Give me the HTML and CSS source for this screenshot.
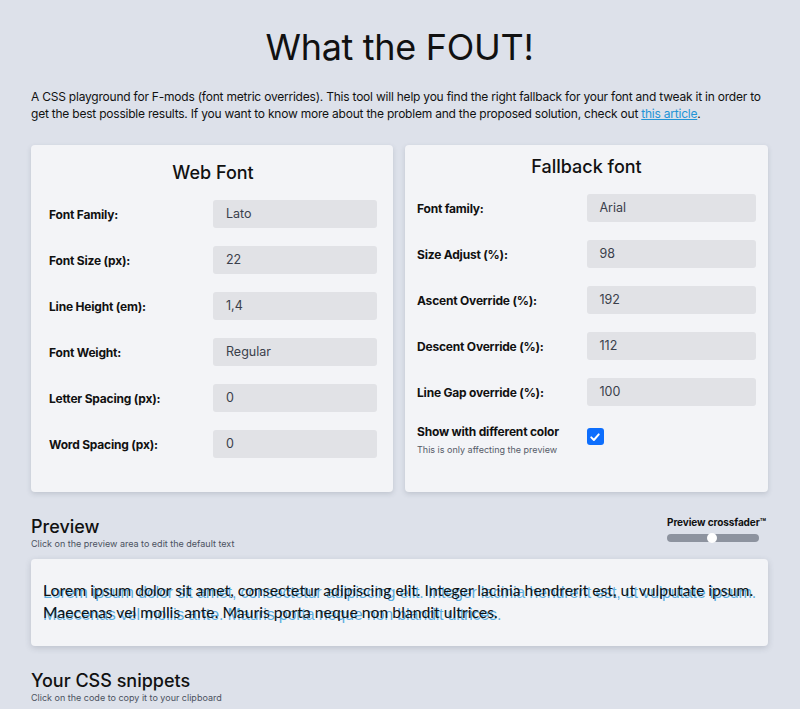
FILE: index.html
```html
<!DOCTYPE html>
<html lang="en">
<head>
<meta charset="utf-8">
<title>What the FOUT!</title>
<link rel="stylesheet" href="styles.css">
</head>
<body>
<main class="page">
  <h1 class="title">What the FOUT!</h1>
  <p class="intro">A CSS playground for F-mods (font metric overrides). This tool will help you find the right fallback for your font and tweak it in order to get the best possible results. If you want to know more about the problem and the proposed solution, check out <a href="#">this article</a>.</p>

  <section class="panels">
    <div class="card card-web">
      <h2 class="card-title">Web Font</h2>
      <div class="form">
        <label class="label">Font Family:</label><div class="input">Lato</div>
        <label class="label">Font Size (px):</label><div class="input">22</div>
        <label class="label">Line Height (em):</label><div class="input">1,4</div>
        <label class="label">Font Weight:</label><div class="input">Regular</div>
        <label class="label">Letter Spacing (px):</label><div class="input">0</div>
        <label class="label">Word Spacing (px):</label><div class="input">0</div>
      </div>
    </div>
    <div class="card card-fallback">
      <h2 class="card-title">Fallback font</h2>
      <div class="form">
        <label class="label">Font family:</label><div class="input">Arial</div>
        <label class="label">Size Adjust (%):</label><div class="input">98</div>
        <label class="label">Ascent Override (%):</label><div class="input">192</div>
        <label class="label">Descent Override (%):</label><div class="input">112</div>
        <label class="label">Line Gap override (%):</label><div class="input">100</div>
        <div class="label-block">
          <div class="label">Show with different color</div>
          <div class="hint">This is only affecting the preview</div>
        </div>
        <div class="check-cell">
          <span class="checkbox"><svg viewBox="0 0 16 16" width="12" height="12"><path d="M3 8.5 L6.5 12 L13 4.5" fill="none" stroke="#fff" stroke-width="2.6" stroke-linecap="round" stroke-linejoin="round"/></svg></span>
        </div>
      </div>
    </div>
  </section>

  <section class="section-head">
    <div>
      <h2 class="section-title">Preview</h2>
      <p class="section-sub">Click on the preview area to edit the default text</p>
    </div>
    <div class="fader">
      <div class="fader-label">Preview crossfader™</div>
      <div class="fader-track"><span class="fader-thumb"></span></div>
    </div>
  </section>

  <div class="preview">
    <p class="preview-fallback" aria-hidden="true">Lorem ipsum dolor sit amet, consectetur adipiscing elit. Integer lacinia hendrerit est, ut vulputate ipsum.<br>Maecenas vel mollis ante. Mauris porta neque non blandit ultrices.</p>
    <p class="preview-web">Lorem ipsum dolor sit amet, consectetur adipiscing elit. Integer lacinia hendrerit est, ut vulputate ipsum. Maecenas vel mollis ante. Mauris porta neque non blandit ultrices.</p>
  </div>

  <section class="section-head">
    <div>
      <h2 class="section-title">Your CSS snippets</h2>
      <p class="section-sub">Click on the code to copy it to your clipboard</p>
    </div>
  </section>

  <div class="snippets">
    <pre class="snippet">@font-face {
  font-family: "Lato-fallback";
  size-adjust: 98%;
  ascent-override: 192%;
}</pre>
    <pre class="snippet">font-family: "Lato", "Lato-fallback";</pre>
  </div>
</main>
</body>
</html>
```

FILE: styles.css
```css
* { box-sizing: border-box; }
html, body { margin: 0; padding: 0; }
body {
  background: #dde1ea;
  font-family: Inter, "Noto Sans", sans-serif;
  color: #111;
}
.page {
  padding: 0 32px 0 31px;
}
.title {
  margin: 0;
  padding-top: 24px;
  font-size: 36px;
  line-height: 46px;
  font-weight: 400;
  text-align: center;
  letter-spacing: -0.3px;
}
.intro {
  margin: 18px 0 0;
  font-size: 12px;
  line-height: 17px;
  letter-spacing: -0.22px;
}
.intro a { color: #2394d6; }

.panels {
  margin-top: 23px;
  display: grid;
  grid-template-columns: 362px 363px;
  gap: 12px;
}
.card {
  background: #f3f4f7;
  border-radius: 4px;
  box-shadow: 0 2px 5px rgba(60, 70, 90, 0.18);
}
.card-web { padding: 16px 16px 34px 18px; }
.card-fallback { padding: 10px 12px 30px 12px; }
.card-title {
  margin: 0 0 15px;
  font-size: 18px;
  line-height: 24px;
  font-weight: 500;
  text-align: center;
}
.form {
  display: grid;
  grid-template-columns: 1fr 1fr;
  row-gap: 18px;
  align-items: center;
}
.label {
  font-size: 12px;
  font-weight: 700;
  letter-spacing: -0.2px;
}
.input {
  height: 28px;
  line-height: 28px;
  background: #e1e2e6;
  border-radius: 3px;
  padding: 0 13px;
  font-size: 12.5px;
  color: #3a3f4b;
}
.label-block { align-self: start; }
.hint {
  margin-top: 5px;
  font-size: 9px;
  color: #555b68;
}
.check-cell { align-self: start; }
.checkbox {
  display: flex;
  align-items: center;
  justify-content: center;
  width: 17px;
  height: 17px;
  background: #0d6efd;
  border-radius: 3px;
  margin-top: 4px;
}

.section-head {
  margin-top: 24px;
  display: flex;
  justify-content: space-between;
  align-items: flex-start;
}
.section-title {
  margin: 0;
  font-size: 18px;
  line-height: 22px;
  font-weight: 500;
}
.section-sub {
  margin: 0;
  font-size: 9px;
  line-height: 12px;
  color: #4b5160;
}
.fader { width: 101px; }
.fader-label {
  font-size: 10px;
  font-weight: 700;
  line-height: 13px;
  white-space: nowrap;
  letter-spacing: -0.1px;
}
.fader-track {
  position: relative;
  margin-top: 5px;
  width: 92px;
  height: 8px;
  border-radius: 4px;
  background: #8d939f;
}
.fader-thumb {
  position: absolute;
  left: 40px;
  top: -1px;
  width: 10px;
  height: 10px;
  border-radius: 50%;
  background: #fff;
}

.preview {
  position: relative;
  margin-top: 9px;
  background: #f3f4f7;
  border-radius: 4px;
  box-shadow: 0 2px 6px rgba(60, 70, 90, 0.2);
  padding: 20px 12px 23px;
}
.preview p {
  margin: 0;
  line-height: 22px;
}
.preview-web {
  position: relative;
  font-family: Lato, sans-serif;
  font-size: 15.75px;
  color: #111;
}
.preview-fallback {
  position: absolute;
  left: 12px;
  top: 22px;
  white-space: nowrap;
  font-family: "Liberation Sans", Arial, sans-serif;
  font-size: 16.1px;
  letter-spacing: -0.2px;
  color: rgba(40, 150, 215, 0.75);
}

.snippets {
  margin-top: 10px;
  display: grid;
  grid-template-columns: 362px 363px;
  gap: 12px;
}
.snippet {
  margin: 0;
  background: #f3f4f7;
  border-radius: 4px;
  padding: 16px;
  font-family: "Liberation Mono", monospace;
  font-size: 12px;
}
```
